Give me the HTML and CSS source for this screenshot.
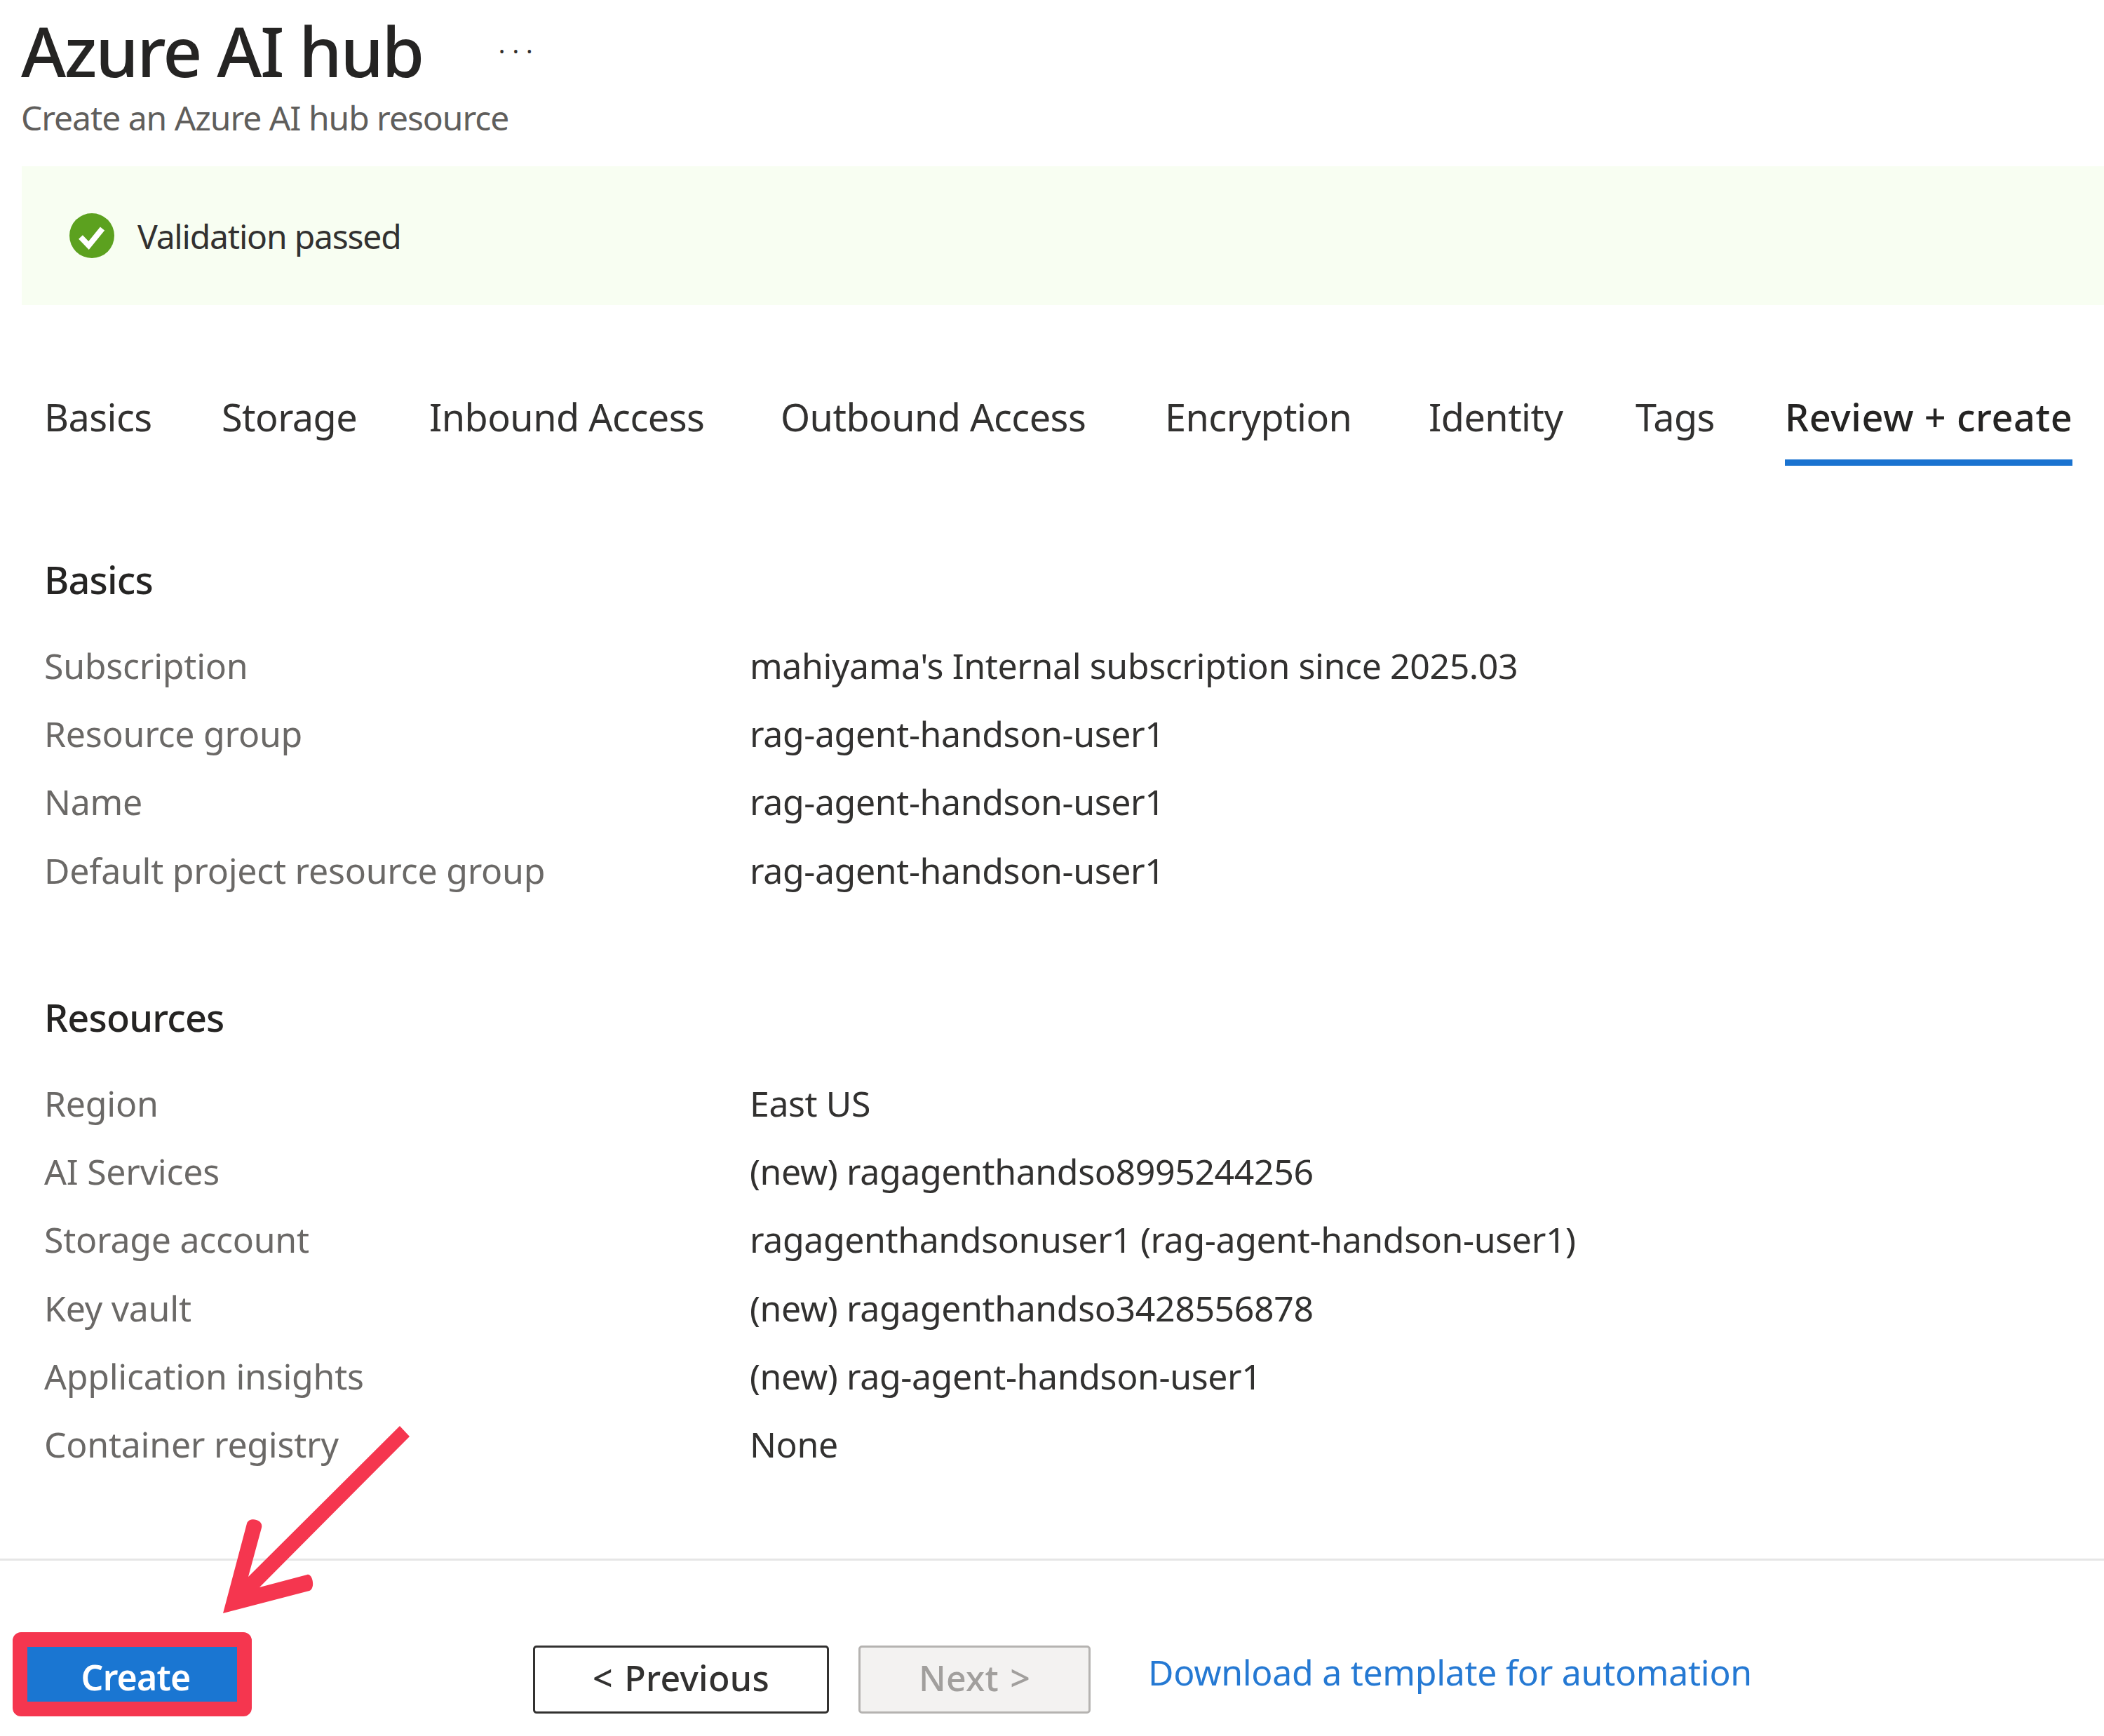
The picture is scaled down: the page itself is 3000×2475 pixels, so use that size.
FILE: index.html
```html
<!DOCTYPE html>
<html lang="en">
<head>
  <meta charset="UTF-8" />
  <title>Azure AI hub</title>
  <link rel="stylesheet" href="styles.css">
</head>
<body>

<header class="page-head">
  <div class="title-row">
    <h1>Azure AI hub</h1>
    <span class="more">...</span>
  </div>
  <p class="subtitle">Create an Azure AI hub resource</p>
</header>

<div class="banner">
  <svg class="check" viewBox="0 0 64 64" width="64" height="64">
    <circle cx="32" cy="32" r="32" fill="#5ca11f" />
    <path d="M16 34 L27.5 46 L47 22" fill="none" stroke="#fff" stroke-width="8" />
  </svg>
  <span>Validation passed</span>
</div>

<nav class="tabs">
  <a>Basics</a>
  <a>Storage</a>
  <a>Inbound Access</a>
  <a>Outbound Access</a>
  <a>Encryption</a>
  <a>Identity</a>
  <a>Tags</a>
  <a class="active">Review + create</a>
</nav>

<section class="group group-basics">
  <h2>Basics</h2>
  <div class="row"><span class="key">Subscription</span><span>mahiyama's Internal subscription since 2025.03</span></div>
  <div class="row"><span class="key">Resource group</span><span>rag-agent-handson-user1</span></div>
  <div class="row"><span class="key">Name</span><span>rag-agent-handson-user1</span></div>
  <div class="row"><span class="key">Default project resource group</span><span>rag-agent-handson-user1</span></div>
</section>

<section class="group group-resources">
  <h2>Resources</h2>
  <div class="row"><span class="key">Region</span><span>East US</span></div>
  <div class="row"><span class="key">AI Services</span><span>(new) ragagenthandso8995244256</span></div>
  <div class="row"><span class="key">Storage account</span><span>ragagenthandsonuser1 (rag-agent-handson-user1)</span></div>
  <div class="row"><span class="key">Key vault</span><span>(new) ragagenthandso3428556878</span></div>
  <div class="row"><span class="key">Application insights</span><span>(new) rag-agent-handson-user1</span></div>
  <div class="row"><span class="key">Container registry</span><span>None</span></div>
</section>

<footer class="actions">
  <div class="create-mark"><button class="btn-create">Create</button></div>
  <button class="btn btn-prev">&lt; Previous</button>
  <button class="btn btn-next">Next &gt;</button>
  <a class="template-link">Download a template for automation</a>
</footer>

<svg class="arrow" viewBox="0 0 300 300" width="300" height="300">
  <path d="M270 3 L284 18 L70 233 L138 215 C146 213 150 235 141 238 L18 270 L52 142 C55 132 76 136 73 148 L54 218 Z" fill="#f5364f" />
</svg>

</body>
</html>
```

FILE: styles.css
```css
* { box-sizing: border-box; }
html, body { margin: 0; padding: 0; }
body {
  width: 3000px;
  height: 2475px;
  position: relative;
  overflow: hidden;
  background: white;
  font-family: "Noto Sans", "Open Sans", sans-serif;
  color: #323130;
}

.page-head { padding: 12px 0 0 30px; height: 237px; }
.title-row { display: flex; align-items: center; height: 120px; }
h1 { margin: 0; font-size: 98px; font-weight: 500; line-height: 120px; color: #252423; letter-spacing: -2.4px; }
.more { margin-left: 108px; font-size: 36px; line-height: 60px; margin-top: -18px; letter-spacing: 10px; color: #323130; }
.subtitle { margin: 6px 0 0; font-size: 48px; line-height: 60px; color: #605e5c; letter-spacing: -1.05px; }

.banner {
  margin-left: 31px;
  height: 198px;
  padding-left: 68px;
  display: flex;
  align-items: center;
  gap: 33px;
  background: #f8fef2;
  font-size: 48px;
  letter-spacing: -1.2px;
}

.tabs {
  display: grid;
  grid-template-columns: 253px 296px 501px 548px 376px 295px 213px auto;
  justify-content: start;
  justify-items: start;
  padding: 122px 0 0 63px;
  height: 229px;
  font-size: 54px;
  letter-spacing: -0.55px;
}
.tabs a { display: block; height: 107px; line-height: 74px; color: #323130; }
.tabs a.active { font-weight: 500; color: #252423; border-bottom: 9px solid #1a73d0; letter-spacing: 0.6px; }

.group { padding-left: 63px; }
.group-basics { height: 746px; padding-top: 122px; }
.group-resources { height: 812px; }
h2 { margin: 0 0 35px; font-size: 54px; line-height: 80px; font-weight: 500; letter-spacing: -0.8px; color: #252423; }
.row { display: flex; height: 97.2px; line-height: 97px; font-size: 50px; letter-spacing: -0.4px; }
.key { width: 1006px; color: #6b6967; letter-spacing: -0.25px; }

.actions {
  border-top: 3px solid #e6e6e6;
  display: flex;
  align-items: flex-start;
  padding: 102px 0 0 18px;
  height: 251px;
}
.create-mark { width: 341px; height: 120px; border: 21px solid #f5364f; border-radius: 12px; }
.btn-create {
  display: block; width: 100%; height: 100%; border: none; padding: 7px 0 0 10px;
  background: #1a76d2; color: white; font: 600 50px "Noto Sans", sans-serif; letter-spacing: -0.8px;
}
.btn {
  height: 97px; margin-top: 19px; padding: 0 0 5px; border-radius: 5px; background: white;
  font: 500 50px "Noto Sans", sans-serif; word-spacing: 3px; letter-spacing: 0.3px;
}
.btn-prev { width: 422px; margin-left: 401px; border: 3px solid #323130; color: #323130; }
.btn-next { width: 331px; margin-left: 42px; border: 3px solid #b5b3b1; background: #f3f2f1; color: #a19f9d; }
.template-link { margin: 22px 0 0 82px; line-height: 70px; font-size: 50px; color: #2579d3; letter-spacing: -0.3px; }

.arrow { position: absolute; left: 300px; top: 2030px; }
```
